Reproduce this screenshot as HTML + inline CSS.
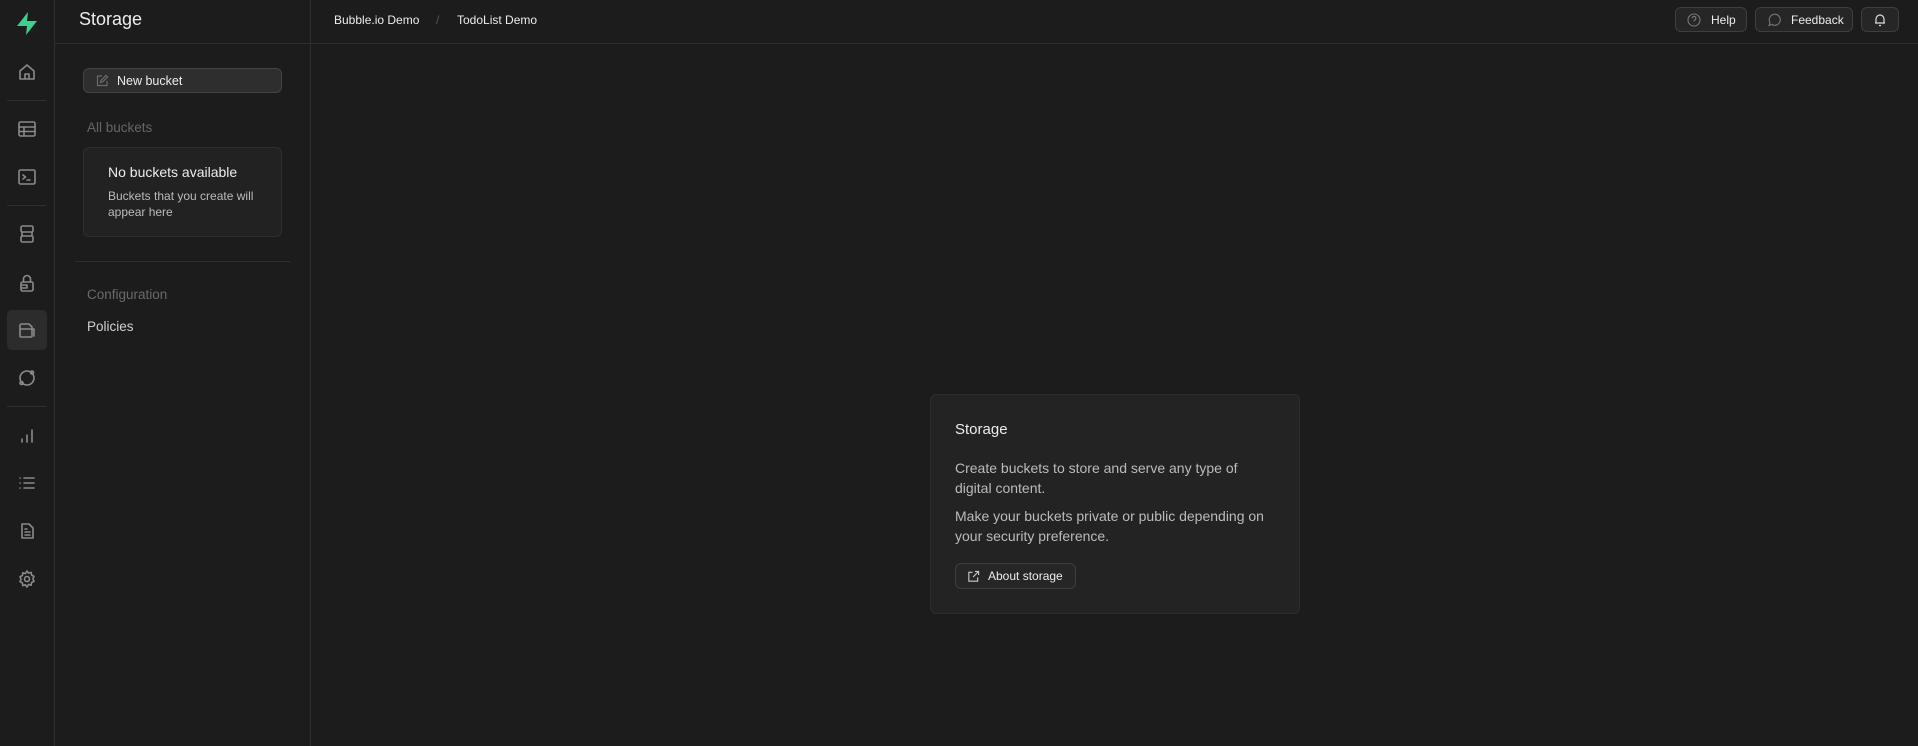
<!DOCTYPE html>
<html><head><meta charset="utf-8"><style>
*{box-sizing:border-box;margin:0;padding:0}
body{width:1918px;height:746px;background:#1c1c1c;font-family:"Liberation Sans",sans-serif;color:#ededed;position:relative;overflow:hidden}
.abs{position:absolute}
.rail{left:0;top:0;width:55px;height:746px;border-right:1px solid #2e2e2e}
.side{left:55px;top:0;width:256px;height:746px;border-right:1px solid #2e2e2e}
.ico{position:absolute;left:17px;width:20px;height:20px}
.ico svg{width:20px;height:20px;fill:none;stroke:#8a8a8a;stroke-width:1.6;stroke-linecap:round;stroke-linejoin:round}
.hr{position:absolute;left:7px;width:39px;height:1px;background:#2e2e2e}
.btn{position:absolute;border:1px solid #3e3e3e;background:#262626;border-radius:6px;font-size:12px;color:#ededed;display:flex;align-items:center}
</style></head><body>
<div class="abs rail">
 <svg class="abs" style="left:15px;top:11px" width="24" height="25" viewBox="0 0 24 25"><path d="M13 1 L2 15 H12 L11 24 L22 10 H12 Z" fill="#3ecf8e"/></svg>
 <div class="abs" style="left:7px;top:310px;width:40px;height:40px;background:#2c2c2c;border-radius:5px"></div>
 <div class="ico" style="top:62px"><svg viewBox="0 0 20 20"><path d="M3 9 L10 3 L17 9 V17 H3 Z M8 17 V12 H12 V17"/></svg></div>
 <div class="hr" style="top:100px"></div>
 <div class="ico" style="top:119px"><svg viewBox="0 0 20 20"><rect x="2" y="3" width="16" height="14" rx="1.5"/><path d="M2 8H18M2 12.5H18M7 8V17"/></svg></div>
 <div class="ico" style="top:167px"><svg viewBox="0 0 20 20"><rect x="2" y="3" width="16" height="14" rx="1.5"/><path d="M6 8L8.5 10L6 12M10 13H13"/></svg></div>
 <div class="hr" style="top:205px"></div>
 <div class="ico" style="top:224px"><svg viewBox="0 0 20 20"><rect x="4" y="2" width="12" height="6" rx="1.5"/><rect x="4" y="12" width="12" height="6" rx="1.5"/><path d="M5 8V12M15 8V12"/></svg></div>
 <div class="ico" style="top:273px"><svg viewBox="0 0 20 20"><path d="M6.5 9V6a3.5 3.5 0 0 1 7 0V9"/><rect x="4" y="9" width="12" height="9" rx="1.5"/><path d="M4 12H10V15H4"/></svg></div>
 <div class="ico" style="top:320px"><svg viewBox="0 0 20 20"><path d="M3 5.5 a1.5 1.5 0 0 1 1.5-1.5H12L15 7V16a1 1 0 0 1-1 1H4a1 1 0 0 1-1-1Z M3 9H17V16"/></svg></div>
 <div class="ico" style="top:368px"><svg viewBox="0 0 20 20"><circle cx="10" cy="10" r="7"/><circle cx="15" cy="4.5" r="1.5"/><circle cx="4.5" cy="15" r="1.5"/></svg></div>
 <div class="hr" style="top:406px"></div>
 <div class="ico" style="top:425px"><svg viewBox="0 0 20 20"><path d="M5 17V14M10 17V10M15 17V5"/></svg></div>
 <div class="ico" style="top:473px"><svg viewBox="0 0 20 20"><path d="M3 5H3.1M3 10H3.1M3 15H3.1M7 5H17M7 10H17M7 15H17"/></svg></div>
 <div class="ico" style="top:521px"><svg viewBox="0 0 20 20"><path d="M5 3H12L16 7V17H5Z M8 8H10M8 11H13M8 14H13"/></svg></div>
 <div class="ico" style="top:569px"><svg viewBox="0 0 20 20"><circle cx="10" cy="10" r="2.5"/><path d="M10 2l1.6 2.2 2.6-.8.4 2.7 2.4 1.2-1.1 2.5 1.1 2.5-2.4 1.2-.4 2.7-2.6-.8L10 18l-1.6-2.2-2.6.8-.4-2.7-2.4-1.2 1.1-2.5L3 7.7l2.4-1.2.4-2.7 2.6.8Z"/></svg></div>
</div>
<div class="abs side">
 <div class="abs" style="left:0;top:0;width:255px;height:44px;border-bottom:1px solid #2e2e2e"></div>
 <div class="abs" style="left:24px;top:9px;font-size:18px;color:#ededed">Storage</div>
 <div class="btn" style="left:28px;top:68px;width:199px;height:25px;background:#2e2e2e;border-color:#444">
  <svg style="margin-left:11px" width="14" height="14" viewBox="0 0 14 14" fill="none" stroke="#6a6a6a" stroke-width="1.2"><path d="M7 2H2.5V11.5H12V7M5.5 8.5L6 6.5L11 1.5L12.5 3L7.5 8Z"/></svg>
  <span style="margin-left:8px;font-size:12.5px">New bucket</span></div>
 <div class="abs" style="left:32px;top:120px;font-size:13.5px;color:#666">All buckets</div>
 <div class="abs" style="left:28px;top:147px;width:199px;height:90px;border:1px solid #2e2e2e;background:#222;border-radius:6px"></div>
 <div class="abs" style="left:53px;top:164px;font-size:14px;color:#ededed">No buckets available</div>
 <div class="abs" style="left:53px;top:188px;font-size:12px;color:#bbb;line-height:16px;width:160px">Buckets that you create will appear here</div>
 <div class="abs" style="left:20px;top:261px;width:215px;height:1px;background:#2e2e2e"></div>
 <div class="abs" style="left:32px;top:287px;font-size:13.5px;color:#6a6a6a">Configuration</div>
 <div class="abs" style="left:32px;top:319px;font-size:13.5px;color:#d0d0d0">Policies</div>
</div>
<div class="abs" style="left:311px;top:43px;width:1607px;height:1px;background:#2e2e2e"></div>
<div class="abs" style="left:334px;top:13px;font-size:12px;color:#ededed">Bubble.io Demo</div>
<div class="abs" style="left:436px;top:13px;font-size:12px;color:#555">/</div>
<div class="abs" style="left:457px;top:13px;font-size:12px;color:#ededed">TodoList Demo</div>
<div class="btn" style="left:1675px;top:7px;width:72px;height:25px"><svg style="margin-left:11px" width="14" height="14" viewBox="0 0 14 14" fill="none" stroke="#777" stroke-width="1.1"><circle cx="7" cy="7" r="6"/><path d="M5.3 5.3a1.8 1.8 0 1 1 2.3 1.7c-.4.2-.6.5-.6 1V8.5M7 10.5V10.6"/></svg><span style="margin-left:10px">Help</span></div>
<div class="btn" style="left:1755px;top:7px;width:98px;height:25px"><svg style="margin-left:11px" width="14" height="14" viewBox="0 0 14 14" fill="none" stroke="#777" stroke-width="1.1"><path d="M2 12.5L3 9.5A5.5 5.5 0 1 1 5 11.5Z"/></svg><span style="margin-left:10px">Feedback</span></div>
<div class="btn" style="left:1861px;top:7px;width:38px;height:25px;justify-content:center"><svg width="14" height="14" viewBox="0 0 14 14" fill="none" stroke="#ddd" stroke-width="1.2"><path d="M3 10V6a4 4 0 0 1 8 0V10H3ZM2 10H12M6 12.5H8"/></svg></div>
<div class="abs" style="left:930px;top:394px;width:370px;height:220px;background:#232323;border:1px solid #2c2c2c;border-radius:6px"></div>
<div class="abs" style="left:955px;top:421px;font-size:15px;color:#ededed">Storage</div>
<div class="abs" style="left:955px;top:458px;width:318px;font-size:14px;color:#bbb;line-height:20px">Create buckets to store and serve any type of digital content.</div>
<div class="abs" style="left:955px;top:506px;width:330px;font-size:14px;color:#bbb;line-height:20px">Make your buckets private or public depending on your security preference.</div>
<div class="btn" style="left:955px;top:563px;width:121px;height:26px"><svg style="margin-left:11px" width="13" height="13" viewBox="0 0 14 14" fill="none" stroke="#ccc" stroke-width="1.2"><path d="M6 2.5H2V12H11.5V8M8.5 1.5H12.5V5.5M12.5 1.5L6.5 7.5"/></svg><span style="margin-left:8px">About storage</span></div>
</body></html>
